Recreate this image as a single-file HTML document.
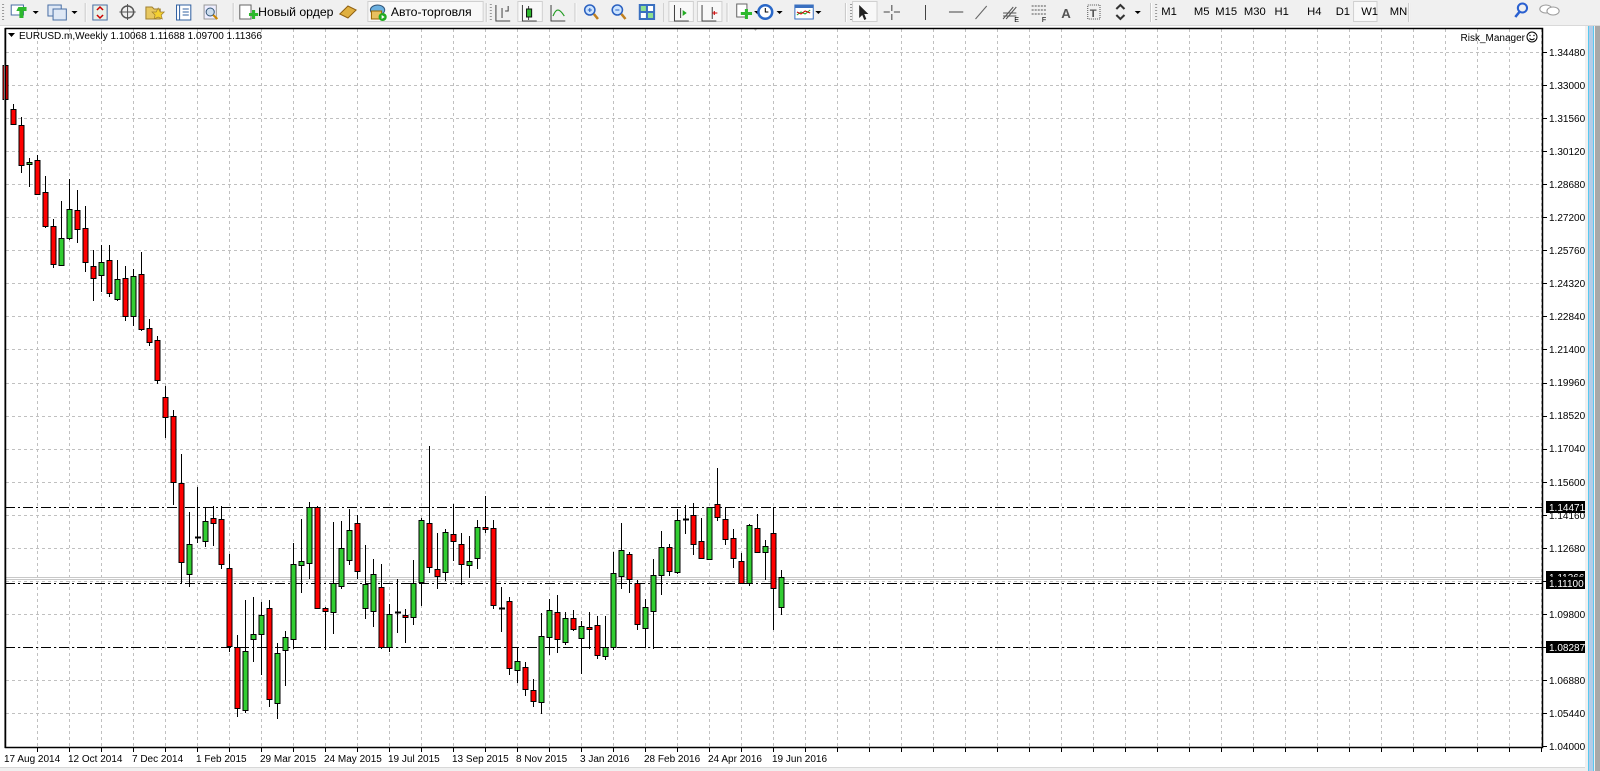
<!DOCTYPE html>
<html><head><meta charset="utf-8">
<style>
html,body{margin:0;padding:0;}
body{width:1600px;height:771px;overflow:hidden;background:#f0f0f0;position:relative;font-family:"Liberation Sans",Arial,sans-serif;}
#tb{position:absolute;left:0;top:0;width:1568px;height:25px;background:#f0f0f0;transform:scaleX(1.0204);transform-origin:0 0;}
#tbl{position:absolute;left:0;top:25px;width:1600px;height:1px;background:#d9d9d9}
.t{position:absolute;font-size:12px;color:#000;top:5px;white-space:nowrap}
.sep{position:absolute;top:3px;width:1px;height:19px;background:#c8c8c8;border-right:1px solid #fff}
.grip{position:absolute;top:4px;width:2px;height:17px;background:repeating-linear-gradient(#999 0 1px,transparent 1px 3px)}
.pr{position:absolute;top:1px;height:21px;background:#f8f8f8;border:1px solid #d0d0d0;box-sizing:border-box}
.tf{position:absolute;top:6px;font-size:11px;color:#000}
svg text{font-family:"Liberation Sans",Arial,sans-serif;}
</style></head><body>
<div id="tbl"></div>
<div id="tb">
  <div class="grip" style="left:2px"></div>
  <div class="pr" style="left:360px;width:114px"></div>
  <div class="pr" style="left:507px;width:25px"></div>
  <div class="pr" style="left:655px;width:25px"></div>
  <div class="pr" style="left:683px;width:25px"></div>
  <div class="pr" style="left:835px;width:25px"></div>
  <div class="pr" style="left:1326px;width:24px"></div>
  <div class="sep" style="left:83px"></div>
  <div class="sep" style="left:228px"></div>
  <div class="sep" style="left:476px"></div>
  <div class="grip" style="left:480px"></div>
  <div class="sep" style="left:563px"></div>
  <div class="sep" style="left:650px"></div>
  <div class="sep" style="left:712px"></div>
  <div class="sep" style="left:828px"></div>
  <div class="grip" style="left:833px"></div>
  <div class="sep" style="left:1127px"></div>
  <div class="grip" style="left:1132px"></div>
  <div class="sep" style="left:1380px"></div>
  <span class="t" style="left:253px">Новый ордер</span>
  <span class="t" style="left:383px">Авто-торговля</span>
  <span class="tf" style="left:1138px">M1</span>
  <span class="tf" style="left:1170px">M5</span>
  <span class="tf" style="left:1191px">M15</span>
  <span class="tf" style="left:1219px">M30</span>
  <span class="tf" style="left:1249px">H1</span>
  <span class="tf" style="left:1281px">H4</span>
  <span class="tf" style="left:1309px">D1</span>
  <span class="tf" style="left:1334px">W1</span>
  <span class="tf" style="left:1362px">MN</span>
  <svg width="1568" height="25" style="position:absolute;left:0;top:0">
    <rect x="11" y="5" width="12" height="10" fill="#fff" stroke="#4a6fa5"/>
    <path d="M19 9h8v4h-3v7h-4v-7h-3" fill="#2db82d" transform="translate(-1,-2)"/>
    <path d="M32 11l3 3 3-3z"/>
    <rect x="47" y="5" width="13" height="11" fill="#dfe8f5" stroke="#4a6fa5"/><rect x="52" y="9" width="13" height="11" fill="#dfe8f5" stroke="#4a6fa5"/>
    <path d="M70 11l3 3 3-3z"/>
    <rect x="91" y="5" width="14" height="15" fill="#e8f0e8" stroke="#4a6fa5"/><path d="M95 10l3-3 3 3M101 15l-3 3-3-3" stroke="#c00" fill="none" stroke-width="1.5"/>
    <circle cx="125" cy="12" r="6" fill="none" stroke="#555" stroke-width="1.5"/><path d="M125 4v16M117 12h16" stroke="#555"/>
    <path d="M143 7h6l2 2h6v10h-14z" fill="#e8c860" stroke="#a08030"/><path d="M155 8l2 4 4 0-3 3 1 4-4-2-4 2 1-4-3-3 4 0z" fill="#f4d030" stroke="#a08030" stroke-width=".7"/>
    <rect x="173" y="5" width="14" height="15" fill="#fff" stroke="#3060a0"/><path d="M176 5v15" stroke="#3060a0"/><path d="M179 9h6M179 12h6M179 15h6" stroke="#3060a0"/>
    <rect x="200" y="5" width="12" height="14" fill="#eef" stroke="#999"/><circle cx="206" cy="12" r="4" fill="#cde" stroke="#357"/><path d="M209 15l4 4" stroke="#c80" stroke-width="2"/>
    <rect x="235" y="5" width="11" height="14" fill="#fff" stroke="#666"/><path d="M244 13h3v-3h3v3h3v3h-3v3h-3v-3h-3z" fill="#2db82d"/>
    <path d="M333 14l8-8 8 4-8 8z" fill="#e0b040" stroke="#906010"/>
    <ellipse cx="370" cy="10" rx="7" ry="5" fill="#6ab0e0" stroke="#357"/><rect x="364" y="11" width="10" height="8" fill="#e8c060" stroke="#960"/><circle cx="375" cy="17" r="4" fill="#2a2"/><path d="M374 15l3 2-3 2z" fill="#fff"/>
    <path d="M486 5v16h14M492 8v10M495 11h3v-5" stroke="#444" fill="none"/>
    <path d="M512 5v16h14M518 6v14" stroke="#444" fill="none"/><rect x="516" y="9" width="5" height="8" fill="#2db82d" stroke="#111"/>
    <path d="M540 5v16h14M542 16c3-8 6-8 11 0" stroke="#444" fill="none"/><path d="M542 16c3-8 6-8 11 0" stroke="#2a2" fill="none"/>
    <circle cx="578" cy="10" r="5" fill="#cce4ff" stroke="#2a60c0" stroke-width="1.5"/><path d="M576 10h4M578 8v4" stroke="#2a60c0"/><path d="M582 14l4 5" stroke="#c08020" stroke-width="2.5"/>
    <circle cx="605" cy="10" r="5" fill="#cce4ff" stroke="#2a60c0" stroke-width="1.5"/><path d="M603 10h4" stroke="#2a60c0"/><path d="M609 14l4 5" stroke="#c08020" stroke-width="2.5"/>
    <rect x="626" y="4" width="16" height="16" fill="#3a70c0"/><rect x="628" y="6" width="5" height="5" fill="#8fe08f"/><rect x="635" y="6" width="5" height="5" fill="#fff"/><rect x="628" y="13" width="5" height="5" fill="#fff"/><rect x="635" y="13" width="5" height="5" fill="#8fe08f"/>
    <path d="M661 5v16h14M667 8v10" stroke="#444" fill="none"/><path d="M669 10l4 3-4 3z" fill="#2a2"/>
    <path d="M688 5v16h14M698 7v12" stroke="#444" fill="none"/><path d="M698 13h5M700 11v4" stroke="#c00"/>
    <rect x="722" y="4" width="10" height="13" fill="#fff" stroke="#666"/><path d="M726 12h4v-3h3v3h4v3h-4v4h-3v-4h-4z" fill="#2db82d"/><path d="M739 11l3 3 3-3z"/>
    <circle cx="750" cy="12" r="8" fill="#2a68c8"/><circle cx="750" cy="12" r="5.5" fill="#fff"/><path d="M750 8v4h3" stroke="#000" fill="none"/><path d="M761 11l3 3 3-3z"/>
    <rect x="779" y="5" width="18" height="14" fill="#fff" stroke="#3a70c0"/><rect x="779" y="5" width="18" height="3" fill="#3a70c0"/><path d="M781 15l4-3 4 2 5-4" stroke="#2a2" fill="none"/><path d="M781 12l4 2 4-3 5 2" stroke="#c00" fill="none"/><path d="M799 11l3 3 3-3z"/>
    <path d="M842 5v13l3-3 2 5 2-1-2-5h4z" fill="#222"/>
    <path d="M874 5v6M874 14v6M866 12h6M876 12h6" stroke="#444"/>
    <path d="M907 5v15" stroke="#444"/>
    <path d="M930 12h14" stroke="#444"/>
    <path d="M956 19l11-13" stroke="#666"/>
    <path d="M983 19l10-12M986 19l10-12M983 13h13M983 16h13" stroke="#555"/><text x="994" y="22" font-size="7">E</text>
    <path d="M1011 6h14M1011 10h14M1011 14h14" stroke="#555" stroke-dasharray="2,1"/><text x="1021" y="22" font-size="7">F</text>
    <text x="1040" y="18" font-size="13" font-weight="bold" fill="#555">A</text>
    <rect x="1066" y="5" width="12" height="14" fill="none" stroke="#555" stroke-dasharray="1,1"/><text x="1068" y="17" font-size="11" font-weight="bold" fill="#555">T</text>
    <path d="M1094 9l4-4 4 4M1094 15l4 4 4-4" stroke="#333" stroke-width="2" fill="none"/><path d="M1112 11l3 3 3-3z"/>
    <circle cx="1492" cy="8" r="4.5" fill="none" stroke="#2a60d0" stroke-width="2"/><path d="M1489 12l-4 5" stroke="#2a60d0" stroke-width="2.5"/>
    <ellipse cx="1515" cy="9" rx="6" ry="4" fill="#fff" stroke="#999"/><ellipse cx="1522" cy="11" rx="6" ry="4" fill="#fff" stroke="#999"/>
  </svg>
</div>
<svg id="ch" width="1600" height="771" style="position:absolute;left:0;top:0" xmlns="http://www.w3.org/2000/svg">
  <rect x="0" y="26" width="1585" height="741" fill="#fff"/>
  <rect x="1588" y="26" width="6" height="745" fill="#b4cce8"/>
  <path d="M1588.5 26v745M1593.5 26v745" stroke="#58c8f0"/>
  <rect x="1595" y="26" width="5" height="745" fill="#a8a8a8"/>
  <path d="M0 767.5h1585" stroke="#d8d8d8"/>
  <g id="grid" stroke="#c0c0c0" stroke-dasharray="3,3" stroke-width="1"></g>
  <g stroke="#c8c8c8"><path d="M5 577.5h1538M5 579.5h1538"/></g>
  <g stroke="#000" stroke-dasharray="10,3,2,3" stroke-width="1">
    <path d="M5 507.5h1538M5 583.5h1538M5 647.5h1538"/>
  </g>
  <g id="cs"></g>
  <path d="M757 29l-3 0 1.5 2z" fill="#bbb"/>
  <path d="M4.5 28v720" stroke="#999"/>
  <rect x="5.5" y="28.5" width="1537" height="719" fill="none" stroke="#000" stroke-width="1.5"/>
  <g id="ticks" stroke="#000"></g>
  <g font-size="10" fill="#000" id="plab">
    <text x="1549" y="56">1.34480</text><text x="1549" y="89">1.33000</text><text x="1549" y="122">1.31560</text><text x="1549" y="155">1.30120</text><text x="1549" y="188">1.28680</text><text x="1549" y="221">1.27200</text><text x="1549" y="254">1.25760</text><text x="1549" y="287">1.24320</text><text x="1549" y="320">1.22840</text><text x="1549" y="353">1.21400</text><text x="1549" y="386">1.19960</text><text x="1549" y="419">1.18520</text><text x="1549" y="452">1.17040</text><text x="1549" y="486">1.15600</text><text x="1549" y="519">1.14160</text><text x="1549" y="552">1.12680</text><text x="1549" y="618">1.09800</text><text x="1549" y="684">1.06880</text><text x="1549" y="717">1.05440</text><text x="1549" y="750">1.04000</text>
  </g>
  <g font-size="10">
  <rect x="1546" y="501" width="39" height="12" fill="#000"/><text x="1549" y="511" fill="#fff">1.14471</text>
  <rect x="1546" y="571" width="39" height="12" fill="#000"/><text x="1549" y="581" fill="#fff">1.11366</text>
  <rect x="1546" y="577" width="39" height="12" fill="#000"/><text x="1549" y="587" fill="#fff">1.11100</text>
  <rect x="1546" y="641" width="39" height="12" fill="#000"/><text x="1549" y="651" fill="#fff">1.08287</text>
  </g>
  <path d="M8 33h7l-3.5 4z" fill="#000"/>
  <text x="19" y="39" font-size="10">EURUSD.m,Weekly  1.10068 1.11688 1.09700 1.11366</text>
  <text x="1525" y="41" font-size="10" text-anchor="end">Risk_Manager</text>
  <circle cx="1532" cy="37" r="5" fill="none" stroke="#000"/><circle cx="1530" cy="35.5" r=".7"/><circle cx="1534" cy="35.5" r=".7"/><path d="M1529.5 38.5q2.5 2.5 5 0" fill="none" stroke="#000"/>
  <g font-size="10" fill="#000" id="dlab">
    <text x="4" y="762">17 Aug 2014</text><text x="68" y="762">12 Oct 2014</text><text x="132" y="762">7 Dec 2014</text><text x="196" y="762">1 Feb 2015</text><text x="260" y="762">29 Mar 2015</text><text x="324" y="762">24 May 2015</text><text x="388" y="762">19 Jul 2015</text><text x="452" y="762">13 Sep 2015</text><text x="516" y="762">8 Nov 2015</text><text x="580" y="762">3 Jan 2016</text><text x="644" y="762">28 Feb 2016</text><text x="708" y="762">24 Apr 2016</text><text x="772" y="762">19 Jun 2016</text>
  </g>
</svg>
<script>
var NS="http://www.w3.org/2000/svg";
function el(t,a,p){var e=document.createElementNS(NS,t);for(var k in a)e.setAttribute(k,a[k]);p.appendChild(e);return e;}
var g=document.getElementById('grid'),tk=document.getElementById('ticks');
for(var x=37;x<1543;x+=32){el('path',{d:'M'+(x+.5)+' 29V747'},g);el('path',{d:'M'+(x+.5)+' 748v4'},tk);}
for(var i=0;i<22;i++){var y=Math.round(52+33.05*i)+.5;if(i<21)el('path',{d:'M6 '+y+'H1542'},g);el('path',{d:'M1543 '+y+'h4'},tk);}
var D=[[63,65,99,104],[104,109,124,124],[117,125,165,173],[158,164,162,187],[155,160,194,194],[176,192,226,228],[219,226,264,268],[201,265,238,265],[179,238,209,240],[190,210,229,243],[206,228,262,272],[250,266,278,301],[245,275,262,292],[245,260,293,297],[260,299,279,301],[266,278,316,321],[269,316,276,326],[252,274,329,331],[319,328,342,346],[336,340,380,384],[386,397,417,438],[410,416,482,505],[454,483,562,583],[512,574,544,587],[487,537,538,543],[507,541,521,547],[506,518,523,546],[506,519,564,569],[554,568,646,652],[635,647,708,717],[600,710,651,713],[597,639,634,662],[602,634,615,675],[600,608,699,707],[643,703,653,719],[631,650,637,686],[543,639,564,649],[519,565,561,593],[502,563,507,579],[506,507,608,609],[607,608,611,650],[522,612,583,634],[521,586,548,589],[509,560,530,565],[515,523,571,579],[545,608,584,619],[559,611,574,627],[564,587,647,649],[604,647,614,652],[579,612,613,633],[609,615,617,643],[560,617,583,625],[518,582,520,606],[446,523,567,573],[533,569,576,589],[529,572,532,581],[504,534,541,561],[533,544,564,585],[536,565,561,578],[520,558,527,569],[496,527,529,533],[520,528,605,609],[587,608,609,632],[597,601,668,675],[647,670,661,683],[662,667,689,696],[679,690,701,707],[613,702,636,714],[599,637,610,655],[595,612,639,653],[612,642,618,645],[610,618,629,631],[621,638,626,674],[612,627,629,649],[616,625,655,659],[616,656,647,660],[552,647,573,650],[523,576,550,589],[552,554,579,593],[580,583,624,630],[599,628,607,648],[559,611,575,649],[531,575,547,595],[544,547,571,576],[509,572,520,574],[505,519,520,534],[503,515,544,555],[518,541,558,559],[507,559,507,559],[468,504,517,521],[507,519,539,545],[529,538,558,568],[553,561,583,583],[524,583,525,586],[514,528,552,553],[540,552,546,580],[507,533,588,630],[570,607,577,615]];
var cs=document.getElementById('cs');
D.forEach(function(c,k){var x=5+8*k+.5;var H=c[0],O=c[1],C=c[2],L=c[3];
 el('path',{d:'M'+x+' '+H+'V'+L,stroke:'#000','stroke-width':1},cs);
 var top=Math.min(O,C),bot=Math.max(O,C);
 if(bot-top<2){el('path',{d:'M'+(x-2.5)+' '+(top+.5)+'h6',stroke:'#000','stroke-width':2},cs);}
 else el('rect',{x:x-2.5,y:top+.5,width:5,height:bot-top,fill:(O>C?'#32cd32':'#ff0000'),stroke:'#000','stroke-width':1},cs);
});
</script>
</body></html>
